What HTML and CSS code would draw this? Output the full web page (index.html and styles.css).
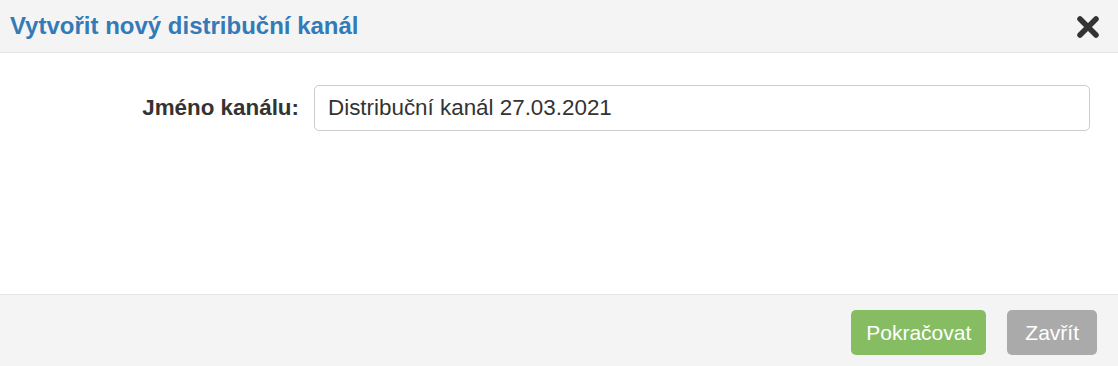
FILE: index.html
```html
<!DOCTYPE html>
<html lang="cs">
<head>
    <meta charset="UTF-8">
    <meta name="viewport" content="width=device-width, initial-scale=1.0">
    <title>Vytvořit nový distribuční kanál</title>
    <link rel="stylesheet" href="styles.css">
</head>
<body>

<div class="modal">
    <div class="modal-header">
        <h4 class="modal-title">Vytvořit nový distribuční kanál</h4>
        <button class="close" type="button" aria-label="Zavřít">
            <svg width="24" height="24" viewBox="0 0 24 24">
                <path d="M4 4 L20 20 M20 4 L4 20" stroke="#333" stroke-width="5.5" stroke-linecap="round"/>
            </svg>
        </button>
    </div>

    <div class="modal-body">
        <div class="form-row">
            <label for="channel-name">Jméno kanálu:</label>
            <input id="channel-name" type="text" value="Distribuční kanál 27.03.2021">
        </div>
    </div>

    <div class="modal-footer">
        <button class="btn btn-success">Pokračovat</button>
        <button class="btn btn-default">Zavřít</button>
    </div>
</div>

</body>
</html>
```

FILE: styles.css
```css
body {
    margin: 0;
    font-family: "Liberation Sans", Arial, sans-serif;
    color: #333;
    background: #fff;
}
.modal {
    width: 1118px;
    height: 366px;
    display: flex;
    flex-direction: column;
}
.modal-header {
    height: 53px;
    box-sizing: border-box;
    background: #f4f4f4;
    border-bottom: 1px solid #e5e5e5;
    display: flex;
    align-items: center;
    justify-content: space-between;
    padding: 0 18px 0 10px;
}
.modal-title {
    margin: 0;
    font-size: 24px;
    font-weight: bold;
    color: #337ab7;
}
.close {
    background: none;
    border: none;
    padding: 0;
    margin-top: 1px;
    cursor: pointer;
    display: flex;
}
.modal-body {
    flex: 1;
    padding: 32px 28px 0 0;
}
.form-row {
    display: flex;
    align-items: center;
}
.form-row label {
    width: 314px;
    text-align: right;
    padding-right: 15px;
    box-sizing: border-box;
    font-size: 22.4px;
    font-weight: bold;
}
.form-row input {
    flex: 1;
    height: 46px;
    box-sizing: border-box;
    border: 1px solid #ccc;
    border-radius: 5px;
    padding: 0 13px;
    font-family: "Liberation Sans", Arial, sans-serif;
    font-size: 22.4px;
    color: #333;
}
.modal-footer {
    height: 72px;
    box-sizing: border-box;
    background: #f4f4f4;
    border-top: 1px solid #e5e5e5;
    display: flex;
    justify-content: flex-end;
    align-items: flex-start;
    gap: 21px;
    padding: 15px 21px 0 0;
}
.btn {
    height: 45px;
    border: none;
    border-radius: 5px;
    padding: 0 15px;
    font-family: "Liberation Sans", Arial, sans-serif;
    font-size: 21px;
    color: #fff;
    cursor: pointer;
}
.btn-success {
    background: #86bd63;
}
.btn-default {
    background: #aaa;
    padding: 0 18px;
}
```
